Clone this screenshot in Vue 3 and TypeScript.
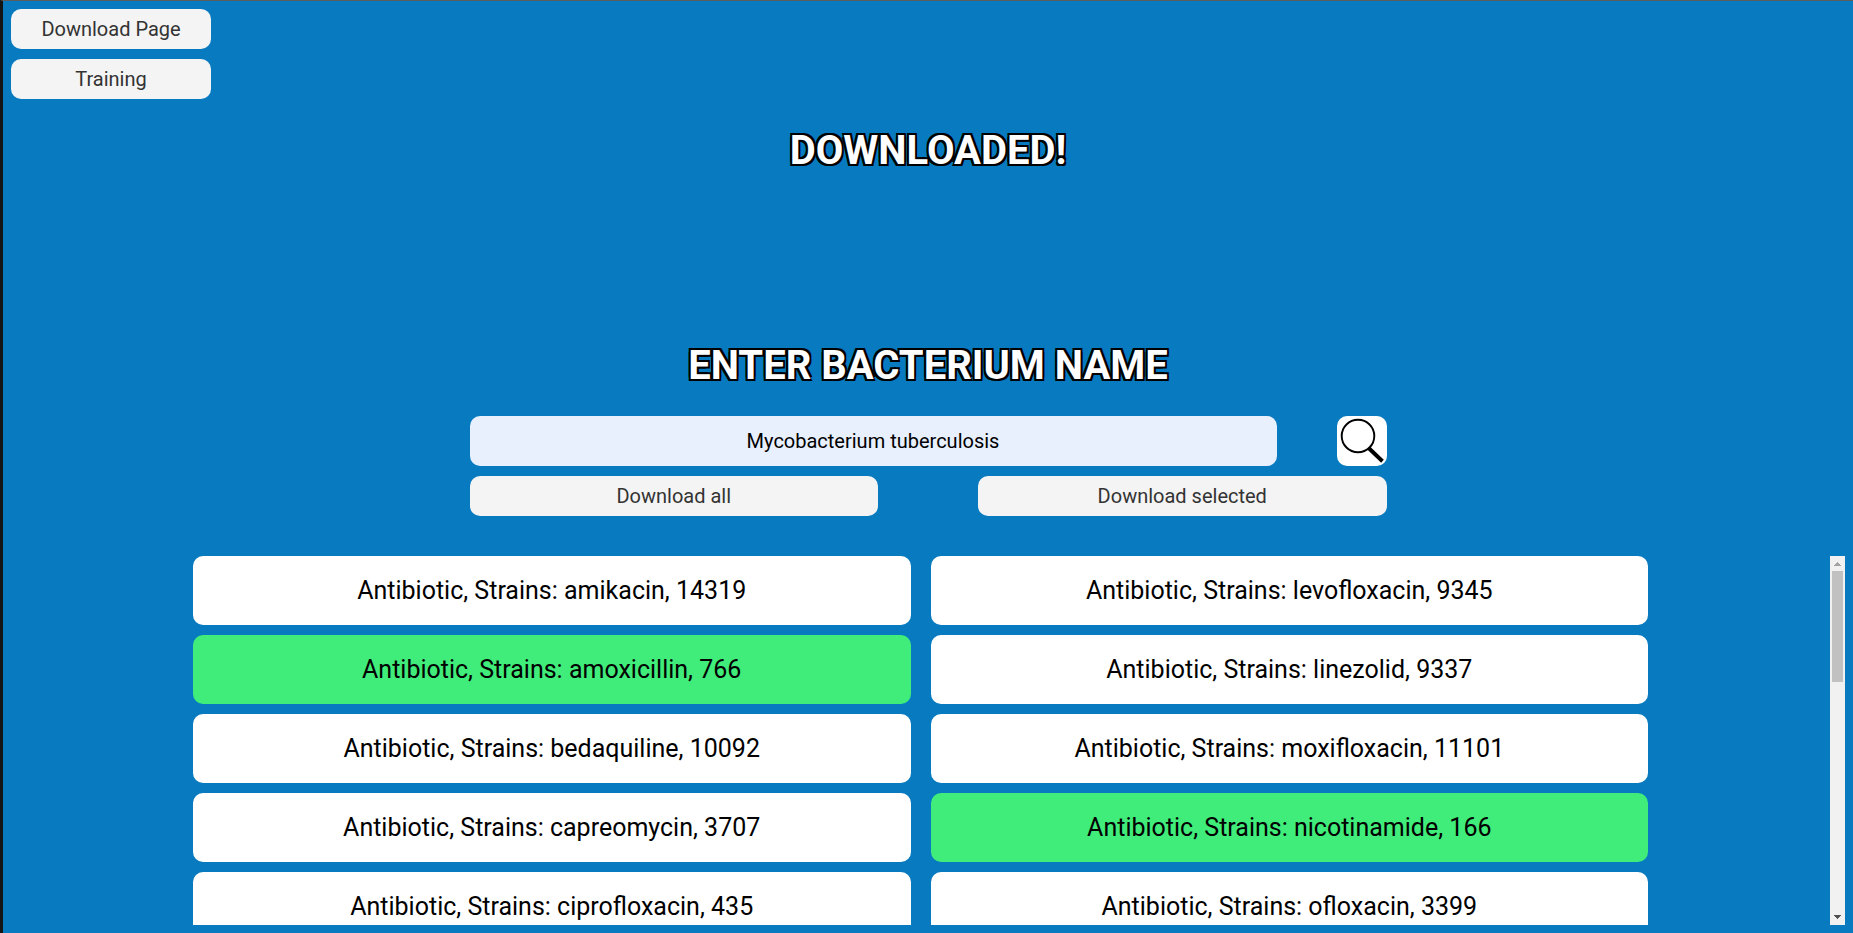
<script setup lang="ts">
import { computed, onBeforeUnmount, onMounted, ref } from 'vue'

interface Antibiotic {
  name: string
  strains: number
  selected: boolean
}

const query = ref('Mycobacterium tuberculosis')

const antibiotics = ref<Antibiotic[]>([
  { name: 'amikacin', strains: 14319, selected: false },
  { name: 'levofloxacin', strains: 9345, selected: false },
  { name: 'amoxicillin', strains: 766, selected: true },
  { name: 'linezolid', strains: 9337, selected: false },
  { name: 'bedaquiline', strains: 10092, selected: false },
  { name: 'moxifloxacin', strains: 11101, selected: false },
  { name: 'capreomycin', strains: 3707, selected: false },
  { name: 'nicotinamide', strains: 166, selected: true },
  { name: 'ciprofloxacin', strains: 435, selected: false },
  { name: 'ofloxacin', strains: 3399, selected: false },
])

function toggle(item: Antibiotic): void {
  item.selected = !item.selected
}

// Scroll state of the result list, mirrored by the scroll bar beside it.
const list = ref<HTMLElement | null>(null)
const scroll = ref({ top: 0, visible: 1, total: 1 })

function measure(): void {
  const el = list.value
  if (!el) return
  scroll.value = { top: el.scrollTop, visible: el.clientHeight, total: el.scrollHeight }
}

function step(direction: number): void {
  list.value?.scrollBy({ top: direction * 79 })
}

const thumbStyle = computed(() => ({
  top: `${(scroll.value.top / scroll.value.total) * 100}%`,
  height: `${(scroll.value.visible / scroll.value.total) * 100}%`,
}))

onMounted(() => {
  measure()
  window.addEventListener('resize', measure)
})

onBeforeUnmount(() => window.removeEventListener('resize', measure))
</script>

<template>
  <div class="page">
    <nav class="nav">
      <button type="button" class="btn">Download Page</button>
      <button type="button" class="btn">Training</button>
    </nav>

    <h1 class="title status">DOWNLOADED!</h1>

    <main class="main">
      <h1 class="title"><label for="bacterium">ENTER BACTERIUM NAME</label></h1>

      <form class="search" @submit.prevent>
        <div class="search-row">
          <input id="bacterium" v-model="query" class="search-input" type="text" autocomplete="off" />
          <button type="submit" class="search-btn" aria-label="Search">
            <svg viewBox="0 0 50 50" width="50" height="50" aria-hidden="true">
              <circle cx="21" cy="20" r="16.3" fill="none" stroke="#000" stroke-width="1.9" />
              <path d="M31.5 31.8 L33.5 31 L46.8 43.8 L44.2 46.8 L31 34.2 Z" fill="#000" />
            </svg>
          </button>
        </div>
        <div class="action-row">
          <button type="button" class="btn">Download all</button>
          <button type="button" class="btn">Download selected</button>
        </div>
      </form>

      <div class="results">
        <div ref="list" class="list" @scroll="measure">
          <div class="grid">
            <button
              v-for="item in antibiotics"
              :key="item.name"
              type="button"
              class="card"
              :class="{ selected: item.selected }"
              :aria-pressed="item.selected"
              @click="toggle(item)"
            >
              Antibiotic, Strains: {{ item.name }}, {{ item.strains }}
            </button>
          </div>
        </div>
        <div class="scrollbar">
          <button type="button" class="arrow up" aria-label="Scroll up" @click="step(-1)">
            <svg viewBox="0 0 15 15" width="15" height="15" aria-hidden="true">
              <path d="M7 6h1v1h1v1h1v1h1v1H4V9h1V8h1V7h1z" />
            </svg>
          </button>
          <div class="track">
            <div class="thumb" :style="thumbStyle"></div>
          </div>
          <button type="button" class="arrow down" aria-label="Scroll down" @click="step(1)">
            <svg viewBox="0 0 15 15" width="15" height="15" aria-hidden="true">
              <path d="M4 5h7v1h-1v1H9v1H8v1H7V8H6V7H5V6H4z" />
            </svg>
          </button>
        </div>
      </div>
    </main>
  </div>
</template>

<style>
body {
  margin: 0;
}
</style>

<style scoped>
.page {
  box-sizing: border-box;
  display: flex;
  flex-direction: column;
  height: 100vh;
  padding: 8px;
  border-top: 1px solid #5c5c5c;
  border-left: 3px solid #141414;
  background: #077ac0;
  font-family: Roboto, "Liberation Sans", sans-serif;
}

.nav {
  display: flex;
  flex-direction: column;
  gap: 10px;
  width: 200px;
}

button,
input {
  box-sizing: border-box;
  margin: 0;
  padding: 0;
  border: 0;
  border-radius: 10px;
  font-family: inherit;
}

button {
  cursor: pointer;
}

.btn {
  flex: 1;
  min-height: 40px;
  background: #f4f4f4;
  color: #333;
  font-size: 20px;
}

.title {
  margin: 27px 0;
  color: #fff;
  font-size: 40px;
  font-weight: 700;
  line-height: 47px;
  text-align: center;
  text-shadow: -2px -2px 0 #000, 2px -2px 0 #000, -2px 2px 0 #000, 2px 2px 0 #000;
}

.status {
  margin: 28px 0 141px;
}

.main {
  display: flex;
  flex: 1;
  flex-direction: column;
  min-height: 0;
}

.search {
  display: flex;
  flex-direction: column;
  gap: 10px;
  width: 50%;
  margin: 0 auto 40px;
}

.search-row {
  display: flex;
  gap: 60px;
}

.search-input {
  flex: 1;
  min-width: 0;
  height: 50px;
  background: #e8f0fe;
  color: #000;
  font-size: 20px;
  text-align: center;
}

.search-btn {
  width: 50px;
  height: 50px;
  background: #fff;
}

svg {
  display: block;
}

.action-row {
  display: flex;
  gap: 100px;
}

.results {
  display: flex;
  flex: 1;
  min-height: 0;
}

.list {
  flex: 1;
  overflow-y: auto;
  scrollbar-width: none;
}

.grid {
  display: grid;
  grid-template-columns: 1fr 1fr;
  align-content: start;
  gap: 10px 20px;
  box-sizing: border-box;
  width: 80%;
  min-height: 1127px;
  margin: 0 auto;
}

.card {
  padding: 20px;
  background: #fff;
  color: #000;
  font-size: 25px;
  line-height: 29px;
}

.card.selected {
  background: #40ec7a;
}

.scrollbar {
  display: flex;
  flex-direction: column;
  width: 15px;
  background: #f1f1f1;
}

.arrow {
  height: 15px;
  border-radius: 0;
  background: none;
}

.up {
  fill: #a3a3a3;
}

.down {
  fill: #505050;
}

.track {
  position: relative;
  flex: 1;
}

.thumb {
  position: absolute;
  right: 2px;
  left: 2px;
  background: #c1c1c1;
}
</style>
